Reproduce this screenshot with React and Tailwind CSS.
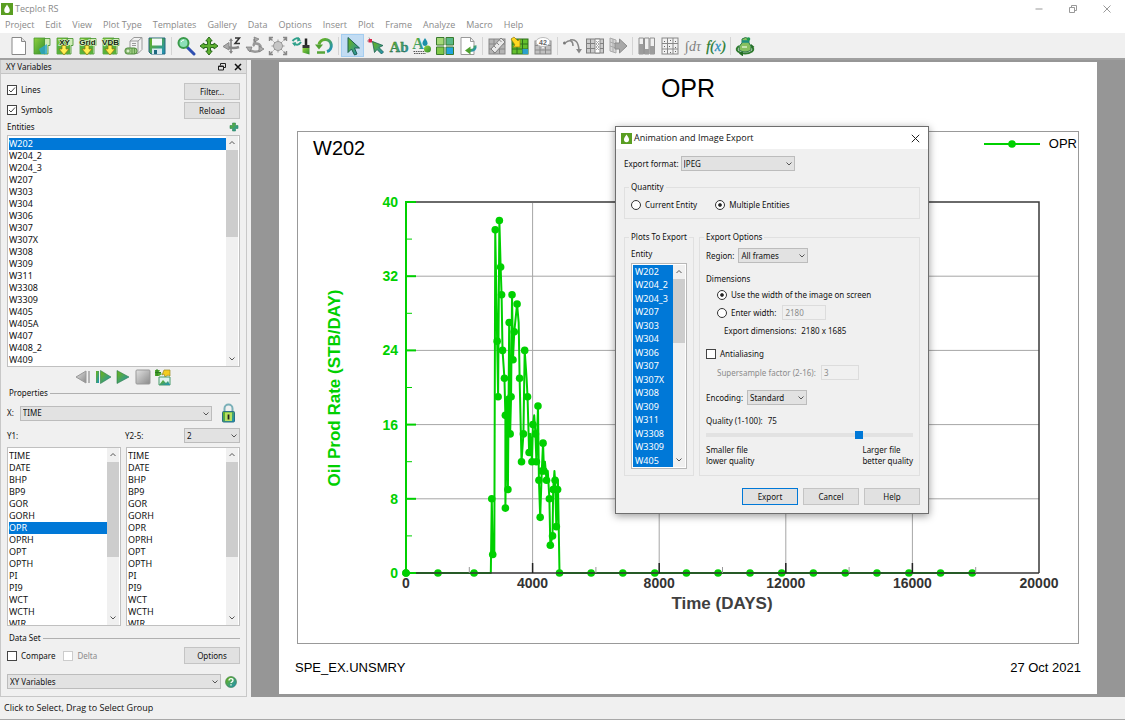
import React, { useState } from 'react';
import clsx from 'clsx';

const MENUS = ['Project', 'Edit', 'View', 'Plot Type', 'Templates', 'Gallery', 'Data', 'Options', 'Insert', 'Plot', 'Frame', 'Analyze', 'Macro', 'Help'];

const WELLS = [
  'W202', 'W204_2', 'W204_3', 'W207', 'W303', 'W304', 'W306', 'W307', 'W307X', 'W308',
  'W309', 'W311', 'W3308', 'W3309', 'W405', 'W405A', 'W407', 'W408_2', 'W409',
];

const VARIABLES = ['TIME', 'DATE', 'BHP', 'BP9', 'GOR', 'GORH', 'OPR', 'OPRH', 'OPT', 'OPTH', 'PI', 'PI9', 'WCT', 'WCTH', 'WIR'];

// [days, rate, marker]
const SERIES = [
  [0, 0, 1], [1010, 0, 1], [2150, 0, 1], [2680, 0, 0], [2710, 8, 1], [2740, 2, 1], [2790, 2, 0], [2820, 37, 1],
  [2880, 25, 1], [2910, 19, 1], [2950, 38, 1], [2990, 33, 1], [3020, 30, 1], [3050, 24, 1], [3110, 21, 1],
  [3140, 17, 1], [3140, 7, 1], [3190, 19, 0], [3220, 9, 1], [3260, 27, 1], [3290, 15, 1], [3320, 19, 1], [3350, 30, 1],
  [3380, 23, 1], [3420, 26, 1], [3510, 29, 1], [3560, 27, 0], [3590, 21, 1], [3650, 12, 1], [3710, 15, 1], [3750, 24, 1],
  [3810, 21, 0], [3840, 19, 1], [3890, 13, 1], [3930, 15, 0], [3980, 12, 1], [4010, 16, 1], [4050, 17, 0], [4090, 15, 1],
  [4120, 12, 1], [4170, 18, 1], [4200, 10, 1], [4240, 6, 1], [4290, 11, 1], [4330, 14, 1], [4360, 11, 1], [4390, 12, 0],
  [4440, 10, 1], [4480, 11, 0], [4530, 8, 1], [4560, 3, 1], [4630, 4, 1], [4650, 9, 1], [4690, 11, 0], [4710, 10, 1],
  [4750, 5, 1], [4790, 9, 1], [4800, 10, 0], [4850, 0, 1],
  [5850, 0, 1], [6850, 0, 1], [7860, 0, 1], [8860, 0, 1], [9860, 0, 1], [10870, 0, 1], [11870, 0, 1],
  [12870, 0, 1], [13880, 0, 1], [14880, 0, 1], [15890, 0, 1], [16890, 0, 1], [17890, 0, 1],
];

const px = (d) => 108 + (d * 633) / 20000;
const py = (v) => 400 - (v * 371) / 40;

/* ---------- icons ---------- */

function Ico({ children, className = 'w-5 h-5', box = '0 0 20 20' }) {
  return <svg viewBox={box} className={className} fill="none" aria-hidden="true">{children}</svg>;
}

function IconDefs() {
  return (
    <svg className="absolute w-0 h-0" aria-hidden="true">
      <defs>
        <linearGradient id="gb" x1="0" y1="0" x2="1" y2="1">
          <stop offset="0.2" stopColor="#5fae2e" />
          <stop offset="1" stopColor="#1a8fc4" />
        </linearGradient>
        <linearGradient id="gg" x1="0" y1="0" x2="1" y2="1">
          <stop offset="0" stopColor="#8fd03c" />
          <stop offset="1" stopColor="#2f8f2f" />
        </linearGradient>
        <linearGradient id="gr" x1="0" y1="0" x2="1" y2="1">
          <stop offset="0" stopColor="#e2e2e2" />
          <stop offset="1" stopColor="#8a8a8a" />
        </linearGradient>
      </defs>
    </svg>
  );
}

function Logo({ className }) {
  return (
    <Ico className={className} box="0 0 12 12">
      <rect width="12" height="12" fill="#5a9e22" />
      <path d="M6 1.500C7 3.600 8.800 5 8.800 7.200A2.800 2.800 0 0 1 3.200 7.200C3.200 5 5 3.600 6 1.500z" fill="#fff" />
    </Ico>
  );
}

function Folder({ label }) {
  return (
    <Ico>
      <path d="M2 2h11v16H2z" fill="url(#gg)" stroke="#4a9a30" strokeWidth=".8" />
      <path d="M12.500 2.500h5.500v7h-2V18h-3.500z" fill="#d0ecb8" stroke="#3f8f28" strokeWidth=".8" />
      {label ? (
        <>
          <path d="M2 9h13v9H2z" fill="#58b03a" />
          <text x="9.500" y="8.500" fontSize="8" fontWeight="bold" textAnchor="middle" fill="#14280e" stroke="#d8f0c4" strokeWidth="1.500" paintOrder="stroke" fontFamily="Liberation Sans, sans-serif">{label}</text>
          <path d="M7 9.500h4v3.500h3L9 19l-5-6h3z" fill="#ffee50" stroke="#8a7410" strokeWidth=".7" />
        </>
      ) : (
        <path d="M7 13l8-5v10H9z" fill="#2aa6d0" opacity=".8" />
      )}
    </Ico>
  );
}

const TOOLS = [
  [
    ['New', <Ico><path d="M3 1.500h9.500l4 4v13H3z" fill="#fff" stroke="#888" /><path d="M12.500 1.500v4h4" fill="#e4e4e4" stroke="#888" /></Ico>],
    ['Open', <Folder />],
    ['Load XY', <Folder label="XY" />],
    ['Load grid', <Folder label="Grid" />],
    ['Load VDB', <Folder label="VDB" />],
    ['Data files', <Ico><path d="M6 5l4-3.500h8v12l-4 4H6z" fill="#f2f2f2" stroke="#9a9a9a" /><path d="M6 5h8v12M14 5l4-3.500M8 7.500h4M8 9.500h4" stroke="#9a9a9a" /><rect x="1" y="12" width="12" height="6" rx="2.500" fill="#9ccb80" stroke="#4d8a3a" /><circle cx="4" cy="15" r="2" fill="#d8efc8" stroke="#4d8a3a" strokeWidth=".6" /><path d="M8 12v6M10.500 12v6" stroke="#4d8a3a" strokeWidth=".7" /></Ico>],
    ['Save', <Ico><path d="M2 2h16v16H4l-2-2z" fill="url(#gb)" stroke="#26687e" /><path d="M5 2.500h10v7H5z" fill="#f4f8f8" /><path d="M5 12.500h10V18H5z" fill="#d8e8f0" /><path d="M7 14h3v4H7z" fill="#1c6880" /></Ico>],
  ],
  [
    ['Zoom', <Ico><path d="M11 11l7 7" stroke="#2e4fb0" strokeWidth="3" strokeLinecap="round" /><circle cx="7.500" cy="7" r="5" fill="#8ce0b8" stroke="#3a9a4a" strokeWidth="2" /><path d="M5 6q1-2 3-2" stroke="#fff" /></Ico>],
    ['Translate', <Ico><path d="M10 1l3.200 4H11.500v3.500H15V7l4 3-4 3v-1.500h-3.500V15h1.700L10 19l-3.200-4h1.700v-3.500H5V13l-4-3 4-3v1.500h3.500V5H6.800z" fill="#5db030" stroke="#2b6b1c" /></Ico>],
    ['Rotate Z', <Ico><path d="M9 3v14" stroke="#9a9a9a" strokeWidth="2" /><path d="M9 2L7 5h4zM9 18l-2-3h4z" fill="#888" /><path d="M17 11q-5 2-12 0" stroke="#888" strokeWidth="2.500" /><path d="M1 10.500l6-4v7.500z" fill="#aaa" stroke="#888" /><path d="M13 2h4.500L13 7.500h5" stroke="#333" strokeWidth="1.500" /></Ico>],
    ['Rotate', <Ico><path d="M9 3q2 4-1 7M8 8q6-2 8 3M3 13q6 5 13 1" stroke="#999" strokeWidth="2.500" /><path d="M9 1l5 2-4 3zM1 11l6 0-2 5zM19 13l-5-3 0 6z" fill="#aaa" stroke="#777" strokeWidth=".7" /></Ico>],
    ['Fit to screen', <Ico><circle cx="10" cy="10" r="4.500" fill="#c6c6c6" stroke="#999" /><path d="M10 3.500v2M10 14.500v2M3.500 10h2M14.500 10h2M5.500 5.500l1.500 1.500M13 13l1.500 1.500M14.500 5.500L13 7M7 13l-1.500 1.500" stroke="#999" /><path d="M1.500 5V1.500H5M15 1.500h3.500V5M18.500 15v3.500H15M5 18.500H1.500V15M1.500 1.500l3 3M18.500 1.500l-3 3M18.500 18.500l-3-3M1.500 18.500l3-3" stroke="#888" strokeWidth="1.400" /></Ico>],
    ['Redraw', <Ico><path d="M1.500 5q4-4.500 7-1.500M10 6q-3 4.500-7 1.500" stroke="#2ea08a" strokeWidth="2" /><path d="M7 1l3 3.500-4 1zM4 10.500L1 7l4-1z" fill="#2ea08a" /><path d="M15 2.500v7" stroke="#222" strokeWidth="2.500" /><path d="M11.500 9h7v3h-7z" fill="#333" /><path d="M11.500 12h7v6.500l-7-2z" fill="url(#gg)" /></Ico>],
    ['Reset view', <Ico><path d="M5 8.500A6.200 6.200 0 1 1 13 15.500" stroke="url(#gb)" strokeWidth="3" /><path d="M1 8.500h8l-4 5z" fill="#4fa030" /><path d="M3 16.500h8" stroke="#57a638" strokeWidth="2.500" /></Ico>],
  ],
  [
    ['Select', <Ico><path d="M5 1.500v15l3.500-3.500 3 6 2.500-1-2.500-6h5z" fill="url(#gb)" stroke="#1c5f50" /></Ico>, true],
    ['Probe', <Ico><path d="M1 5q4-1 8 2M3 1.500L5.500 6" stroke="#999" /><rect x="2.500" y="3" width="3.500" height="3.500" fill="#d8284a" /><path d="M6.500 5.500l2 11 2.500-3 4.500 4.500 2-2-4.500-4.500 4-2z" fill="url(#gb)" stroke="#1c5f50" strokeWidth=".8" /></Ico>],
    ['Text', <Ico><text x="10" y="16" fontSize="15" fontWeight="bold" textAnchor="middle" fill="url(#gb)" stroke="#266040" strokeWidth=".3" fontFamily="Liberation Serif, serif">Ab</text></Ico>],
    ['Text style', <Ico><text x="6" y="13" fontSize="16" fontWeight="bold" textAnchor="middle" fill="url(#gb)" fontFamily="Liberation Serif, serif">A</text><path d="M13 2q3 4 2.500 6-.5 2-2.500 2t-2.500-2q-.5-2 2.500-6z" fill="#1b8fa8" /><circle cx="15.500" cy="13" r="3.500" fill="url(#gg)" /><path d="M1.500 15.500h11M2 17.500h12" stroke="#555" strokeDasharray="1.500 .8" /></Ico>],
    ['Frames', <Ico><path d="M1.500 1.500h7.500v7.500H1.500z" fill="#a4d878" stroke="#3a7a2c" /><path d="M11 1.500h7.500v7.500H11z" fill="#58b888" stroke="#3a7a2c" /><path d="M1.500 11h7.500v7.500H1.500z" fill="#80c848" stroke="#3a7a2c" /><path d="M11 11h7.500v7.500H11z" fill="#20a4dc" stroke="#3a7a2c" /></Ico>],
    ['Export page', <Ico><path d="M3 1.500h9.500l3.500 4v13H3z" fill="#fff" stroke="#999" /><path d="M12.500 1.500v4H16" stroke="#999" /><path d="M17 9.500q1 5-5 5" stroke="url(#gb)" strokeWidth="3" /><path d="M7 14.500l5.500-4v8z" fill="#4fa030" /></Ico>],
  ],
  [
    ['Edit grid', <Ico><rect x="2" y="3" width="16" height="15" fill="#b4b4b4" stroke="#888" /><path d="M2 8h16M2 13h16M7 3v15M12.500 3v15" stroke="#888" /><path d="M4 13L14 2l4 4L8 17z" fill="#e8e8e8" stroke="#808080" /><path d="M7 10l2 2M10 7l2 2M12.500 4l2 2" stroke="#888" /></Ico>],
    ['Load grid arrow', <Ico><rect x="2" y="3" width="16" height="15" fill="#63c02e" stroke="#2f6e1c" /><path d="M2 8h16M2 13h16M7 3v15M12.500 3v15" stroke="#2f6e1c" /><path d="M12.500 13H18v5h-5.500z" fill="#2aa0cc" /><path d="M1 3l3-2 4 4 2-2v8H3l2-2z" fill="#ffd820" stroke="#9a7a10" strokeWidth=".7" /></Ico>],
    ['Cell values', <Ico><rect x="2" y="5" width="16" height="13" fill="#c0c0c0" stroke="#8a8a8a" /><path d="M2 9.500h16M2 14h16M7 5v13M12.500 5v13" stroke="#8a8a8a" /><path d="M8 9l2 4 2-4z" fill="#fff" /><ellipse cx="10" cy="6" rx="7" ry="4.500" fill="#fff" stroke="#bbb" /><text x="10" y="8.500" fontSize="7" fontWeight="bold" textAnchor="middle" fill="#666" fontFamily="Liberation Sans, sans-serif">42</text></Ico>],
  ],
  [
    ['Streamline', <Ico><circle cx="2.500" cy="7" r="1.500" fill="#777" /><path d="M3 7q4-3 6-2t2 5M8 4q8-2 9 10" stroke="#888" strokeWidth="1.500" /><path d="M14 13h6l-3 4.500z" fill="#888" /></Ico>],
    ['Slice', <Ico><rect x="1.500" y="3" width="17" height="14" fill="#ccc" stroke="#808080" /><path d="M1.500 7.500h17M1.500 12.500h17M5.500 3v14" stroke="#808080" /><path d="M10 3h5v14h-5z" fill="#fff" stroke="#888" /><path d="M11 5l3 3-3 3 3 3M14 5l-3 3 3 3-3 3" stroke="#aaa" /></Ico>],
    ['Move slice', <Ico><path d="M2 2l6 2v13l-6-2z" fill="#d6d6d6" stroke="#aaa" /><path d="M2 6l6 2M2 10l6 2M5 3v13" stroke="#aaa" /><path d="M7 7h4.500V3l7.500 7-7.500 7v-4H7z" fill="#a8a8a8" stroke="#8c8c8c" /></Ico>],
  ],
  [
    ['Histogram', <Ico><path d="M2 2h4.500v16H2zM7.500 2H12v16H7.500zM13 2h4.500v16H13z" fill="#f0f0f0" stroke="#909090" /><path d="M2 8h4.500v10H2zM7.500 13H12v5H7.500zM13 10h4.500v8H13z" fill="#9c9c9c" /></Ico>],
    ['Scatter matrix', <Ico><rect x="2" y="2" width="16" height="16" fill="#f2f2f2" stroke="#888" /><path d="M2 7.500h16M2 13h16M7.500 2v16M13 2v16" stroke="#888" /><path d="M4 5h1v1H4zM10 4h1v1h-1zM15 5h1v1h-1zM4 10h1v1H4zM9 10h1v1H9zM15 11h1v1h-1zM4 15h1v1H4zM10 16h1v1h-1zM15 15h1v1h-1z" fill="#666" /></Ico>],
    ['Integrate', <Ico><text x="10" y="15" fontSize="14" fontStyle="italic" textAnchor="middle" fill="#808080" fontFamily="Liberation Serif, serif">∫dτ</text></Ico>],
    ['Equation', <Ico><text x="10" y="15" fontSize="14" fontStyle="italic" textAnchor="middle" fill="#1f7a2c" stroke="#1f7a2c" strokeWidth=".3" fontFamily="Liberation Serif, serif">f(<tspan fill="#2a90c0" stroke="#2a90c0">x</tspan>)</text></Ico>],
  ],
  [
    ['Reservoir', <Ico><path d="M4 10q-4 3-1 5.500 3 2 7 2t7-2q3-2.500-1-5.500" stroke="#2e7a2e" strokeWidth="2" /><path d="M8 14.500v6l-4-3zM16 8l3.500 3-5 2z" fill="#256e25" /><path d="M7 3q3.500-3 7 0v4q3 3 2 7-6 4-12 0-1-4 3-7z" fill="#86c060" stroke="#2e7a4a" /><path d="M7 5.500h7" stroke="#1b8f80" strokeWidth="2.500" /><circle cx="13.500" cy="3" r="1.800" fill="#1f9a50" /><path d="M7 11h5" stroke="#d8f0c8" strokeWidth="1.500" /></Ico>],
  ],
];

const Chevron = ({ up, className }) => (
  <Ico className={className} box="0 0 8 8">
    <path d={up ? 'M1.500 5L4 2.500 6.500 5' : 'M1.500 2.500L4 5 6.500 2.500'} stroke="#555" />
  </Ico>
);

/* ---------- controls ---------- */

function Select({ id, options, className, label }) {
  return (
    <span className={clsx('relative flex', className)}>
      <select id={id} aria-label={label} className="w-full h-[15px] appearance-none bg-[#e2e2e2] border border-[#bcbcbc] pl-[2px] pr-3 leading-3">
        {options.map((o) => <option key={o}>{o}</option>)}
      </select>
      <Chevron className="absolute right-[2px] top-1 w-2 h-2 pointer-events-none" />
    </span>
  );
}

function Check({ children, checked, disabled }) {
  return (
    <label className={clsx('flex items-center gap-1 leading-3', disabled && 'text-[#8c8c8c]')}>
      <span className="relative flex">
        <input type="checkbox" defaultChecked={checked} disabled={disabled} className="peer appearance-none w-[10px] h-[10px] border border-[#444] bg-white disabled:border-[#ccc]" />
        <svg viewBox="0 0 10 10" className="absolute inset-0 hidden peer-checked:block pointer-events-none" fill="none">
          <path d="M2 5l2 2 4-4.500" stroke="#444" />
        </svg>
      </span>
      {children}
    </label>
  );
}

function Radio({ name, children, checked }) {
  return (
    <label className="flex items-center gap-1 leading-3">
      <input type="radio" name={name} defaultChecked={checked} className="appearance-none w-[10px] h-[10px] rounded-full border border-[#333] bg-white p-[2px] bg-clip-content shadow-[inset_0_0_0_2px_#fff] checked:bg-[#222]" />
      {children}
    </label>
  );
}

function Button({ children, primary }) {
  return (
    <button className={clsx('w-14 h-[17px] bg-[#e1e1e1] border leading-3', primary ? 'border-[#0078d7]' : 'border-[#c4c4c4]')}>
      {children}
    </button>
  );
}

function ScrollBar({ thumb }) {
  return (
    <div className="w-3 shrink-0 flex flex-col bg-[#f0f0f0]">
      <button aria-label="Scroll up" className="h-[14px] flex items-center justify-center"><Chevron up className="w-2 h-2" /></button>
      <div className="flex-1"><div className={clsx('bg-[#cdcdcd]', thumb)} /></div>
      <button aria-label="Scroll down" className="h-[14px] flex items-center justify-center"><Chevron className="w-2 h-2" /></button>
    </div>
  );
}

function ListBox({ items, initial, label, thumb, className }) {
  const [selected, setSelected] = useState(initial);
  return (
    <div className={clsx('flex bg-white border border-[#c0c0c0] px-px overflow-hidden', className)}>
      <ul role="listbox" aria-label={label} className="flex-1 overflow-hidden pt-[2px] text-[9px]">
        {items.map((item) => (
          <li
            key={item}
            role="option"
            aria-selected={selected === item}
            onClick={() => setSelected(item)}
            className={clsx('h-3 leading-3', selected === item && 'bg-[#0078d7] text-white')}
          >
            {item}
          </li>
        ))}
      </ul>
      <ScrollBar thumb={thumb} />
    </div>
  );
}

function Rule({ children }) {
  return (
    <div className="flex items-center gap-[2px] pl-[2px] leading-3">
      <span>{children}</span>
      <div className="flex-1 h-px bg-[#b0b0b0]" />
    </div>
  );
}

/* ---------- panels ---------- */

function Toolbar() {
  return (
    <div className="h-[25px] flex items-center bg-[#f0f0f0] pl-[7px]">
      {TOOLS.map((group, i) => (
        <React.Fragment key={i}>
          {i > 0 && <div className="w-[6px] flex justify-center"><div className="w-px h-[18px] bg-[#d4d4d4]" /></div>}
          {group.map(([name, icon, active]) => (
            <button key={name} aria-label={name} className={clsx('w-[23px] h-[23px] flex items-center justify-center', active && 'bg-[#c2dcf3] border border-[#a4cdf0]')}>
              {icon}
            </button>
          ))}
        </React.Fragment>
      ))}
    </div>
  );
}

function Sidebar() {
  return (
    <aside className="w-[247px] shrink-0 flex flex-col bg-[#f0f0f0] border-x border-b border-[#c8c8c8]">
      <div className="h-[14px] flex items-center justify-between bg-[#dedede] border-b border-[#c4c4c4] pl-[5px] pr-1">
        <h2>XY Variables</h2>
        <div className="flex gap-2">
          <button aria-label="Float">
            <Ico className="w-2 h-2" box="0 0 8 8"><path d="M2.500 2.500v-2h5v4h-2M.5 3h5v4h-5zM.5 3.500h5" stroke="#222" /></Ico>
          </button>
          <button aria-label="Close panel">
            <Ico className="w-2 h-2" box="0 0 8 8"><path d="M1 1l6 6M7 1L1 7" stroke="#111" strokeWidth="1.500" /></Ico>
          </button>
        </div>
      </div>

      <div className="px-[6px] pt-[9px]">
        <div className="flex justify-between">
          <div className="flex flex-col gap-2 pt-px">
            <Check checked>Lines</Check>
            <Check checked>Symbols</Check>
          </div>
          <div className="flex flex-col gap-[2px]">
            <Button>Filter...</Button>
            <Button>Reload</Button>
          </div>
        </div>
        <div className="flex items-center justify-between pr-px h-4">
          <span>Entities</span>
          <button aria-label="Add entity">
            <Ico className="w-[10px] h-[10px]" box="0 0 10 10"><path d="M3.500 1h3v2.500H9v3H6.500V9h-3V6.500H1v-3h2.500z" fill="url(#gb)" stroke="#2c8a5a" strokeWidth=".6" /></Ico>
          </button>
        </div>
        <ListBox items={WELLS} initial="W202" label="Entities" thumb="h-[87px]" className="h-[232px]" />

        <div className="flex items-center gap-[2px] pl-[67px] pt-px pb-px">
          <button aria-label="Step back"><Ico className="w-[18px] h-[18px]" box="0 0 18 18"><path d="M12 3v12L2 9z" fill="url(#gr)" stroke="#999" /><path d="M14 3h2v12h-2z" fill="#b4b4b4" /></Ico></button>
          <button aria-label="Step forward"><Ico className="w-[18px] h-[18px]" box="0 0 18 18"><path d="M2 3h3v12H2z" fill="url(#gb)" /><path d="M6.500 2.500v13L17 9z" fill="url(#gb)" stroke="#2a7a4a" strokeWidth=".6" /></Ico></button>
          <button aria-label="Play"><Ico className="w-[18px] h-[18px]" box="0 0 18 18"><path d="M3 2.500v13L15 9z" fill="url(#gb)" stroke="#2a7a4a" strokeWidth=".6" /></Ico></button>
          <button aria-label="Stop"><Ico className="w-[18px] h-[18px]" box="0 0 18 18"><rect x="2" y="2" width="14" height="14" rx="1" fill="url(#gr)" stroke="#999" /></Ico></button>
          <button aria-label="Export animation">
            <Ico className="w-[18px] h-[18px]" box="0 0 18 18">
              <path d="M1 2h5l-1 2 3 2-3 2H1z" fill="#4ca82c" />
              <path d="M3 1v7M1 4.500h6" stroke="#2a7a20" />
              <path d="M10 2h6v6l-2-1-3 2-1-3-2 1z" fill="#f4cc20" stroke="#9a8a20" strokeWidth=".7" />
              <path d="M5 9h11v8H5z" fill="#dff4f0" stroke="#4a9a6a" />
              <path d="M5 17l4-5 3 3 2-2 2 4z" fill="url(#gb)" />
            </Ico>
          </button>
        </div>

        <Rule>Properties</Rule>
        <div className="flex items-center justify-between pt-1 pr-1">
          <div className="flex items-center gap-[6px]">
            <label htmlFor="x-var">X:</label>
            <Select id="x-var" options={['TIME', 'DATE']} className="w-[192px]" />
          </div>
          <button aria-label="Lock">
            <Ico className="w-[15px] h-5" box="0 0 15 20">
              <path d="M3.500 10V5.500a4 4 0 0 1 8 0V10" stroke="#7ab0b8" strokeWidth="2" />
              <rect x="1.500" y="8.500" width="12" height="10.500" rx="1" fill="url(#gb)" stroke="#2a6f86" />
              <rect x="4" y="9.500" width="7" height="8.500" fill="#b8e060" />
              <path d="M7.500 11.500v5" stroke="#222" strokeWidth="1.800" />
            </Ico>
          </button>
        </div>

        <div className="flex items-center pt-[5px]">
          <span className="w-[118px]">Y1:</span>
          <label htmlFor="y-count" className="flex-1">Y2-5:</label>
          <Select id="y-count" options={['2', '3', '4', '5']} className="w-14" />
        </div>
        <div className="flex gap-[5px] pt-1">
          <ListBox items={VARIABLES} initial="OPR" label="Y1 variables" thumb="h-[95px]" className="flex-1 h-[179px]" />
          <ListBox items={VARIABLES} initial="" label="Y2-5 variables" thumb="h-[95px]" className="flex-1 h-[179px]" />
        </div>

        <div className="pt-[6px] pb-[3px]"><Rule>Data Set</Rule></div>
        <div className="flex items-center justify-between">
          <div className="flex gap-2">
            <Check>Compare</Check>
            <Check disabled>Delta</Check>
          </div>
          <Button>Options</Button>
        </div>
        <div className="flex items-center gap-1 pt-[10px]">
          <Select label="Plot type" options={['XY Variables']} className="w-[214px]" />
          <button aria-label="Help on panel">
            <Ico className="w-3 h-3" box="0 0 12 12">
              <circle cx="6" cy="6" r="5.500" fill="url(#gb)" stroke="#3a7a4a" strokeWidth=".6" />
              <path d="M4 4.600q0-2 2-2t2 1.700q0 1-1 1.500t-1 1.300M6 8.300v1.300" stroke="#fff" strokeWidth="1.300" />
            </Ico>
          </button>
        </div>
      </div>
    </aside>
  );
}

function Plot() {
  const line = SERIES.map(([d, v]) => `${px(d)},${py(v)}`).join(' ');
  return (
    <svg viewBox="0 0 780 470" className="w-full h-auto font-['Liberation_Sans',sans-serif] font-bold" role="img" aria-label="Oil production rate over time">
      {[4000, 8000, 12000, 16000].map((d) => <path key={d} d={`M${px(d)} 30V400`} stroke="#a6a6a6" />)}
      {[8, 16, 24, 32].map((v) => <path key={v} d={`M108 ${py(v)}H741`} stroke="#a6a6a6" />)}
      <path d="M108 29H741V400" fill="none" stroke="#3a3a3a" strokeWidth="1.500" />

      <polyline points={line} fill="none" stroke="#00d000" strokeWidth="2" strokeLinejoin="round" />
      {SERIES.filter((p) => p[2]).map(([d, v], i) => <circle key={i} cx={px(d)} cy={py(v)} r="3.800" fill="#00d000" />)}

      <path d="M108 400H741" stroke="#333" strokeWidth="1.500" />
      {[4000, 8000, 12000, 16000].map((d) => <path key={d} d={`M${px(d)} 400v-10`} stroke="#222" strokeWidth="1.500" />)}
      {[2000, 6000, 10000, 14000, 18000].map((d) => <path key={d} d={`M${px(d)} 400v-6`} stroke="#999" />)}
      {[0, 4000, 8000, 12000, 16000, 20000].map((d) => (
        <text key={d} x={px(d)} y="415" fontSize="14" textAnchor="middle" fill="#333">{d}</text>
      ))}
      <text x="424" y="436" fontSize="17" textAnchor="middle" fill="#404040">Time (DAYS)</text>

      <path d="M108 28V401" stroke="#00d000" strokeWidth="2" />
      {[0, 8, 16, 24, 32, 40].map((v) => (
        <g key={v}>
          <path d={`M108 ${py(v)}h10`} stroke="#00d000" strokeWidth="2" />
          <text x="100" y={py(v) + 5} fontSize="14" textAnchor="end" fill="#00d000">{v}</text>
        </g>
      ))}
      {[4, 12, 20, 28, 36].map((v) => <path key={v} d={`M108 ${py(v)}h6`} stroke="#00d000" />)}
      <circle cx="108" cy="400" r="3.800" fill="#00d000" />
      <text transform="translate(42 215) rotate(-90)" fontSize="17" textAnchor="middle" fill="#00d000">Oil Prod Rate (STB/DAY)</text>
    </svg>
  );
}

function Page() {
  return (
    <div className="flex-1 bg-white font-['Liberation_Sans',sans-serif] text-black text-[13px]">
      <h1 className="pt-3 pb-[29px] text-[25px] leading-7 text-center">OPR</h1>
      <div className="mx-[18px] border border-[#999]">
        <div className="flex justify-between pl-[15px] pr-px">
          <div className="text-xl leading-8 pb-[9px]">W202</div>
          <div className="flex h-6 items-center gap-[9px]">
            <svg viewBox="0 0 56 8" className="w-14 h-2">
              <path d="M0 4h56" stroke="#00d000" strokeWidth="2" />
              <circle cx="28" cy="4" r="3.800" fill="#00d000" />
            </svg>
            OPR
          </div>
        </div>
        <Plot />
      </div>
      <div className="flex justify-between px-4 pt-[14px] leading-5">
        <span>SPE_EX.UNSMRY</span>
        <span>27 Oct 2021</span>
      </div>
    </div>
  );
}

function Group({ title, className, children }) {
  return (
    <fieldset className={clsx('border border-[#e0e0e0] px-[6px]', className)}>
      <legend className="-mx-[2px] px-[2px] leading-3 whitespace-nowrap">{title}</legend>
      {children}
    </fieldset>
  );
}

function ExportDialog() {
  const [quality, setQuality] = useState(75);
  return (
    <div role="dialog" aria-label="Animation and Image Export" className="absolute left-[364px] top-[66px] w-[314px] bg-[#f0f0f0] border border-[#6e6e6e] shadow-[0_2px_8px_rgba(0,0,0,0.4)]">
      <div className="h-[22px] flex items-center bg-white pl-[5px] pr-2 font-['Open_Sans','Noto_Sans',sans-serif]">
        <Logo className="w-[11px] h-[11px]" />
        <h2 className="flex-1 pl-[2px] text-[9px]">Animation and Image Export</h2>
        <button aria-label="Close dialog">
          <Ico className="w-[9px] h-[9px]" box="0 0 9 9"><path d="M.8.8l7.400 7.400M8.200.8L.8 8.200" stroke="#222" /></Ico>
        </button>
      </div>

      <div className="px-2 pt-[7px] pb-2">
        <div className="flex items-center gap-[2px]">
          <label htmlFor="format">Export format:</label>
          <Select id="format" options={['JPEG', 'PNG', 'AVI']} className="w-[114px]" />
        </div>

        <Group title="Quantity" className="mt-[10px] pb-[7px]">
          <div className="flex gap-[18px] pt-[6px]">
            <Radio name="quantity">Current Entity</Radio>
            <Radio name="quantity" checked>Multiple Entities</Radio>
          </div>
        </Group>

        <div className="flex gap-[5px] mt-3">
          <Group title="Plots To Export" className="w-[70px] pb-[6px]">
            <div className="pt-[5px] leading-3">Entity</div>
            <div className="mt-[3px] w-14 h-[206px] flex bg-white border border-[#b8b8b8] p-px">
              <ul role="listbox" aria-label="Plots to export" aria-multiselectable="true" className="flex-1 flex flex-col bg-[#0078d7] text-white pl-[2px] text-[9px]">
                {WELLS.slice(0, 15).map((w) => (
                  <li key={w} role="option" aria-selected="true" className="flex-1 leading-[13px]">{w}</li>
                ))}
              </ul>
              <ScrollBar thumb="h-16" />
            </div>
          </Group>

          <Group title="Export Options" className="flex-1">
            <div className="flex items-center gap-1 pt-[5px]">
              <label htmlFor="region">Region:</label>
              <Select id="region" options={['All frames', 'Current frame']} className="w-[70px]" />
            </div>
            <div className="pt-[10px] leading-3">Dimensions</div>
            <div className="pl-[11px]">
              <div className="pt-1"><Radio name="dim" checked>Use the width of the image on screen</Radio></div>
              <div className="flex items-center gap-[6px] pt-1">
                <Radio name="dim">Enter width:</Radio>
                <input aria-label="Width" defaultValue="2180" disabled className="w-11 h-[15px] pl-[2px] border border-[#dcdcdc] text-[#8c8c8c]" />
              </div>
              <div className="flex gap-[5px] pl-[7px] pt-[5px] leading-3">
                <span>Export dimensions:</span>
                <span>2180 x 1685</span>
              </div>
            </div>
            <div className="pt-[11px]"><Check>Antialiasing</Check></div>
            <div className="flex items-center gap-[5px] pl-[11px] pt-[5px] text-[#8c8c8c]">
              <label htmlFor="factor">Supersample factor (2-16):</label>
              <input id="factor" defaultValue="3" disabled className="w-[38px] h-[15px] pl-[2px] border border-[#dcdcdc]" />
            </div>
            <div className="flex items-center gap-1 pt-[10px]">
              <label htmlFor="encoding">Encoding:</label>
              <Select id="encoding" options={['Standard', 'Sequential']} className="w-[60px]" />
            </div>
            <div className="flex gap-[5px] pt-[10px] leading-3">
              <label htmlFor="quality">Quality (1-100):</label>
              <span>{quality}</span>
            </div>
            <input
              id="quality"
              type="range"
              min="1"
              max="100"
              value={quality}
              onChange={(e) => setQuality(Number(e.target.value))}
              className="block w-full mt-1 h-2 appearance-none bg-transparent [&::-webkit-slider-runnable-track]:h-1 [&::-webkit-slider-runnable-track]:bg-[#e2e2e2] [&::-webkit-slider-thumb]:appearance-none [&::-webkit-slider-thumb]:w-2 [&::-webkit-slider-thumb]:h-2 [&::-webkit-slider-thumb]:-mt-[2px] [&::-webkit-slider-thumb]:bg-[#0078d7]"
            />
            <div className="flex justify-between pt-[5px] leading-[11px]">
              <div>Smaller file<br />lower quality</div>
              <div>Larger file<br />better quality</div>
            </div>
          </Group>
        </div>

        <div className="flex justify-end gap-[5px] pt-3">
          <Button primary>Export</Button>
          <Button>Cancel</Button>
          <Button>Help</Button>
        </div>
      </div>
    </div>
  );
}

export default function App() {
  return (
    <div className="min-h-screen flex flex-col bg-white font-['Noto_Sans','Open_Sans',sans-serif] text-[8px] text-[#111]">
      <IconDefs />
      <header className="font-['Open_Sans','Noto_Sans',sans-serif] text-[9px]">
        <div className="h-[17px] flex items-center text-[#8a8a8a]">
          <Logo className="w-3 h-3 ml-px" />
          <span className="flex-1 pl-[2px]">Tecplot RS</span>
          <div className="flex items-center gap-[26px] pr-[14px]">
            <button aria-label="Minimize"><Ico className="w-2 h-2" box="0 0 8 8"><path d="M.5 4h7" stroke="#999" /></Ico></button>
            <button aria-label="Restore"><Ico className="w-2 h-2" box="0 0 8 8"><path d="M2.500 2V.5h5v5H6M.5 2.500h5v5h-5z" stroke="#999" /></Ico></button>
            <button aria-label="Close"><Ico className="w-2 h-2" box="0 0 8 8"><path d="M.5.5l7 7M7.500.5l-7 7" stroke="#999" /></Ico></button>
          </div>
        </div>
        <nav className="h-4 flex items-center gap-[11px] pl-[5px] text-[#8a8a8a]">
          {MENUS.map((m) => <button key={m}>{m}</button>)}
        </nav>
        <Toolbar />
        <div className="h-[2px] bg-[#a0a0a0]" />
      </header>

      <div className="flex-1 flex bg-[#f0f0f0]">
        <Sidebar />
        <main className="relative flex-1 flex ml-1 pt-[2px] pb-[3px] px-7 bg-[#969696]">
          <Page />
          <ExportDialog />
        </main>
      </div>

      <footer className="h-[23px] flex items-center bg-[#f0f0f0] border-b border-[#a8a8a8] pl-1 font-['Open_Sans','Noto_Sans',sans-serif] text-[9px]">Click to Select, Drag to Select Group</footer>
    </div>
  );
}
